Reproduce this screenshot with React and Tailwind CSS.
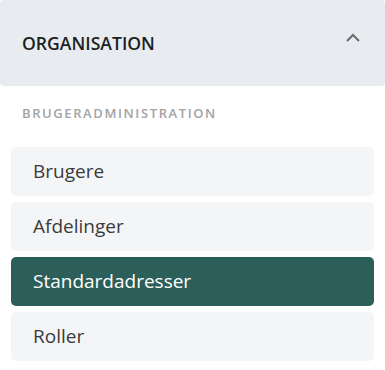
export default function App() {
  const items = ["Brugere", "Afdelinger", "Standardadresser", "Roller"];
  const active = "Standardadresser";

  return (
    <div className="w-[385px] h-[370px] bg-white font-['Open_Sans',sans-serif]">
      <div className="flex h-[86px] items-center justify-between rounded-[4px] bg-[#e8ecf0] pl-[22px] pr-[24px]">
        <span className="text-[17.6px] font-semibold text-[#1c1f24]">ORGANISATION</span>
        <svg width="16" height="10" viewBox="0 0 16 10" className="mb-[10px]">
          <path d="M2 8 L8 2 L14 8" fill="none" stroke="#6b6b6b" strokeWidth="2" />
        </svg>
      </div>

      <div className="px-[22px] pt-[21px] pb-[27px] text-[13px] font-semibold tracking-[1.6px] text-[#a3a3a3] leading-none">
        BRUGERADMINISTRATION
      </div>

      <div className="mx-[11px] flex flex-col gap-[6px]">
        {items.map((item) => (
          <div
            key={item}
            className={
              item === active
                ? "flex h-[49px] items-center rounded-[5px] bg-[#2d5f5a] px-[22px] text-[19px] text-white"
                : "flex h-[49px] items-center rounded-[5px] bg-[#f4f5f7] px-[22px] text-[19px] text-[#3b3b3b]"
            }
          >
            {item}
          </div>
        ))}
      </div>
    </div>
  );
}
